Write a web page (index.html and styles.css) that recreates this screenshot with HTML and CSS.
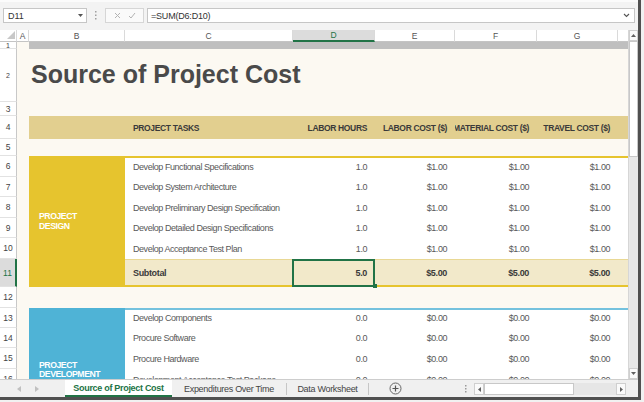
FILE: index.html
```html
<!DOCTYPE html>
<html>
<head>
<meta charset="utf-8">
<title>Source of Project Cost</title>
<link rel="stylesheet" href="styles.css">
</head>
<body>
<div class="window">
  <div class="fbar">
    <div class="namebox"><span>D11</span><svg class="nb-arrow" width="5" height="3" viewBox="0 0 5 3"><path d="M0 0h5L2.5 3z" fill="#555"/></svg></div>
    <div class="vdots"><svg width="2" height="9" viewBox="0 0 2 9"><rect x="0" y="0" width="1.5" height="1.5" fill="#a0a0a0"/><rect x="0" y="3.5" width="1.5" height="1.5" fill="#a0a0a0"/><rect x="0" y="7" width="1.5" height="1.5" fill="#a0a0a0"/></svg></div>
    <div class="fbtns">
      <svg width="7" height="7" viewBox="0 0 7 7"><path d="M1 1l5 5M6 1l-5 5" stroke="#b3b3b3" stroke-width="1"/></svg>
      <svg width="8" height="7" viewBox="0 0 8 7"><path d="M1 4l2 2 4-5" stroke="#b3b3b3" stroke-width="1" fill="none"/></svg>
    </div>
    <div class="finput"><span>=SUM(D6:D10)</span><svg width="7" height="5" viewBox="0 0 7 5"><path d="M1 1l2.5 2.5L6 1" stroke="#555" stroke-width="1.1" fill="none"/></svg></div>
  </div>

  <div class="main">
    <div class="sheet">
      <!-- column headers -->
      <div class="ch corner"><svg width="8" height="8" viewBox="0 0 8 8"><path d="M8 0v8H0z" fill="#c8c8c8"/></svg></div>
      <div class="ch">A</div>
      <div class="ch">B</div>
      <div class="ch">C</div>
      <div class="ch sel">D</div>
      <div class="ch">E</div>
      <div class="ch">F</div>
      <div class="ch">G</div>
      <div class="ch last"></div>

      <!-- row 1 -->
      <div class="rh tiny">1</div>
      <div class="c"></div>
      <div class="c band span7"></div>

      <!-- row 2 -->
      <div class="rh tiny">2</div>
      <div class="c"></div>
      <div class="c title span7">Source of Project Cost</div>

      <!-- row 3 -->
      <div class="rh">3</div>
      <div class="c"></div>
      <div class="c span7"></div>

      <!-- row 4 -->
      <div class="rh">4</div>
      <div class="c"></div>
      <div class="c hb"></div>
      <div class="c hb l">PROJECT TASKS</div>
      <div class="c hb r">LABOR HOURS</div>
      <div class="c hb r">LABOR COST ($)</div>
      <div class="c hb r">MATERIAL COST ($)</div>
      <div class="c hb r">TRAVEL COST ($)</div>
      <div class="c hb"></div>

      <!-- row 5 -->
      <div class="rh">5</div>
      <div class="c"></div>
      <div class="c span7"></div>

      <!-- row 6 -->
      <div class="rh">6</div>
      <div class="c"></div>
      <div class="c block yb">PROJECT<br>DESIGN</div>
      <div class="c w gtop l">Develop Functional Specifications</div>
      <div class="c w gtop r">1.0</div>
      <div class="c w gtop r">$1.00</div>
      <div class="c w gtop r">$1.00</div>
      <div class="c w gtop r">$1.00</div>
      <div class="c w gtop"></div>

      <!-- row 7 -->
      <div class="rh">7</div>
      <div class="c"></div>
      <div class="c w l">Develop System Architecture</div>
      <div class="c w r">1.0</div>
      <div class="c w r">$1.00</div>
      <div class="c w r">$1.00</div>
      <div class="c w r">$1.00</div>
      <div class="c w"></div>

      <!-- row 8 -->
      <div class="rh">8</div>
      <div class="c"></div>
      <div class="c w l">Develop Preliminary Design Specification</div>
      <div class="c w r">1.0</div>
      <div class="c w r">$1.00</div>
      <div class="c w r">$1.00</div>
      <div class="c w r">$1.00</div>
      <div class="c w"></div>

      <!-- row 9 -->
      <div class="rh">9</div>
      <div class="c"></div>
      <div class="c w l">Develop Detailed Design Specifications</div>
      <div class="c w r">1.0</div>
      <div class="c w r">$1.00</div>
      <div class="c w r">$1.00</div>
      <div class="c w r">$1.00</div>
      <div class="c w"></div>

      <!-- row 10 -->
      <div class="rh">10</div>
      <div class="c"></div>
      <div class="c w l">Develop Acceptance Test Plan</div>
      <div class="c w r">1.0</div>
      <div class="c w r">$1.00</div>
      <div class="c w r">$1.00</div>
      <div class="c w r">$1.00</div>
      <div class="c w"></div>

      <!-- row 11 -->
      <div class="rh sel">11</div>
      <div class="c"></div>
      <div class="c st l">Subtotal</div>
      <div class="c st r selcell">5.0</div>
      <div class="c st r">$5.00</div>
      <div class="c st r">$5.00</div>
      <div class="c st r">$5.00</div>
      <div class="c st"></div>

      <!-- row 12 -->
      <div class="rh">12</div>
      <div class="c"></div>
      <div class="c span7"></div>

      <!-- row 13 -->
      <div class="rh">13</div>
      <div class="c"></div>
      <div class="c block bb">PROJECT<br>DEVELOPMENT</div>
      <div class="c w btop l">Develop Components</div>
      <div class="c w btop r">0.0</div>
      <div class="c w btop r">$0.00</div>
      <div class="c w btop r">$0.00</div>
      <div class="c w btop r">$0.00</div>
      <div class="c w btop"></div>

      <!-- row 14 -->
      <div class="rh">14</div>
      <div class="c"></div>
      <div class="c w l">Procure Software</div>
      <div class="c w r">0.0</div>
      <div class="c w r">$0.00</div>
      <div class="c w r">$0.00</div>
      <div class="c w r">$0.00</div>
      <div class="c w"></div>

      <!-- row 15 -->
      <div class="rh">15</div>
      <div class="c"></div>
      <div class="c w l">Procure Hardware</div>
      <div class="c w r">0.0</div>
      <div class="c w r">$0.00</div>
      <div class="c w r">$0.00</div>
      <div class="c w r">$0.00</div>
      <div class="c w"></div>

      <!-- row 16 -->
      <div class="rh">16</div>
      <div class="c"></div>
      <div class="c w l">Development Acceptance Test Package</div>
      <div class="c w r">0.0</div>
      <div class="c w r">$0.00</div>
      <div class="c w r">$0.00</div>
      <div class="c w r">$0.00</div>
      <div class="c w"></div>

      <!-- row 17 -->
      <div class="rh">17</div>
      <div class="c"></div>
      <div class="c w l"></div>
      <div class="c w"></div>
      <div class="c w"></div>
      <div class="c w"></div>
      <div class="c w"></div>
      <div class="c w"></div>

      <!-- row 18 -->
      <div class="rh">18</div>
      <div class="c"></div>
      <div class="c w l"></div>
      <div class="c w"></div>
      <div class="c w"></div>
      <div class="c w"></div>
      <div class="c w"></div>
      <div class="c w"></div>
    </div>

    <div class="vscroll">
      <div class="vbtn"><svg width="5" height="3" viewBox="0 0 5 3"><path d="M0 3h5L2.5 0z" fill="#606060"/></svg></div>
      <div class="vthumb"></div>
      <div class="vtrack"></div>
      <div class="vbtn"><svg width="5" height="3" viewBox="0 0 5 3"><path d="M0 0h5L2.5 3z" fill="#606060"/></svg></div>
    </div>
  </div>

  <div class="tabbar">
    <div class="nav">
      <svg width="4" height="6" viewBox="0 0 4 6"><path d="M4 0v6L0 3z" fill="#c0c0c0"/></svg>
      <svg width="4" height="6" viewBox="0 0 4 6"><path d="M0 0v6l4-3z" fill="#c0c0c0"/></svg>
    </div>
    <div class="tab active">Source of Project Cost</div>
    <div class="tab t2">Expenditures Over Time</div>
    <div class="sep"></div>
    <div class="tab t3">Data Worksheet</div>
    <div class="sep"></div>
    <div class="plus"><svg width="13" height="13" viewBox="0 0 13 13"><circle cx="6.5" cy="6.5" r="5.5" fill="none" stroke="#666" stroke-width="1"/><path d="M6.5 3.5v6M3.5 6.5h6" stroke="#555" stroke-width="1.2"/></svg></div>
    <div class="hdots"><svg width="2" height="8" viewBox="0 0 2 8"><rect x="0" y="0" width="1.5" height="1.5" fill="#9a9a9a"/><rect x="0" y="3" width="1.5" height="1.5" fill="#9a9a9a"/><rect x="0" y="6" width="1.5" height="1.5" fill="#9a9a9a"/></svg></div>
    <div class="hscroll">
      <div class="hbtn"><svg width="3" height="5" viewBox="0 0 3 5"><path d="M3 0v5L0 2.5z" fill="#606060"/></svg></div>
      <div class="hthumb"></div>
      <div class="htrack"></div>
      <div class="hbtn"><svg width="3" height="5" viewBox="0 0 3 5"><path d="M0 0v5l3-2.5z" fill="#606060"/></svg></div>
    </div>
  </div>
</div>
</body>
</html>
```

FILE: styles.css
```css
* { box-sizing: border-box; }
html, body { margin: 0; padding: 0; }
body {
  width: 644px;
  height: 402px;
  overflow: hidden;
  background: #f1f1f1;
  font-family: "Liberation Sans", Arial, sans-serif;
}
.window {
  width: 641px;
  height: 400px;
  border-right: 3px solid #505050;
  border-bottom: 3px solid #505050;
  display: flex;
  flex-direction: column;
  background: #f3f3f3;
}

/* formula bar */
.fbar {
  flex: none;
  height: 30px;
  display: flex;
  align-items: flex-start;
  padding: 6px 0 0 3px;
  border-top: 2px solid #fbfbfb;
  background: #f3f3f3;
  font-size: 9px;
  color: #333;
}
.namebox {
  width: 84px;
  height: 15px;
  background: #fff;
  border: 1px solid #c6c6c6;
  display: flex;
  align-items: center;
  justify-content: space-between;
  padding: 0 3px 0 4px;
}
.vdots {
  width: 18px;
  height: 15px;
  display: flex;
  align-items: center;
  justify-content: center;
}
.fbtns {
  width: 39px;
  height: 15px;
  border: 1px solid #d6d6d6;
  background: #fafafa;
  display: flex;
  align-items: center;
  justify-content: space-around;
  padding: 0 4px;
}
.finput {
  margin-left: 3px;
  width: 488px;
  height: 15px;
  background: #fff;
  border: 1px solid #c6c6c6;
  display: flex;
  align-items: center;
  justify-content: space-between;
  padding: 0 4px 0 3px;
  letter-spacing: -0.2px;
}

/* main area */
.main {
  flex: none;
  height: 349px;
  display: flex;
}
.sheet {
  width: 628px;
  height: 349px;
  overflow: hidden;
  display: grid;
  grid-template-columns: 17px 12px 96px 168px 82px 80px 82px 81px 10px;
  grid-template-rows: 12px 7px 53px 14px 23px 17px 21px 20px 21px 20px 21px 28px 21px 20px 20px 21px 21px 21px 21px;
  background: #fcf9f2;
  font-size: 9px;
  letter-spacing: -0.45px;
  color: #595959;
}
.c {
  display: flex;
  align-items: center;
  white-space: nowrap;
  overflow: hidden;
  min-width: 0;
}
.l { padding-left: 8px; }
.r { justify-content: flex-end; padding-right: 8px; }
.span7 { grid-column: span 7; }

.ch {
  background: #fff;
  border-right: 1px solid #dadada;
  border-bottom: 1px solid #c4c4c4;
  display: flex;
  align-items: center;
  justify-content: center;
  color: #555;
  font-size: 8.5px;
  letter-spacing: 0;
}
.ch.corner {
  align-items: flex-end;
  justify-content: flex-end;
  padding: 0 1px 2px 0;
}
.ch.sel {
  background: #dcdcdc;
  color: #217346;
  border-bottom: 2px solid #217346;
}
.ch.last { border-right: none; }

.rh {
  background: #fff;
  border-right: 1px solid #c8c8c8;
  border-bottom: 1px solid #e2e2e2;
  display: flex;
  align-items: center;
  justify-content: center;
  color: #444;
  font-size: 8.5px;
  letter-spacing: 0;
}
.rh.tiny { font-size: 7px; line-height: 7px; }
.rh.sel {
  background: #dcdcdc;
  color: #217346;
  border-right: 2px solid #217346;
}

.band { background: #bfbfbf; }
.title {
  font-size: 25px;
  font-weight: bold;
  color: #4a4a4a;
  letter-spacing: 0;
  padding-left: 2px;
  padding-bottom: 2px;
}
.hb {
  background: #e2cf8f;
  font-weight: bold;
  color: #3a3a3a;
  font-size: 8.5px;
  letter-spacing: -0.35px;
}
.w { background: #fff; }
.gtop { box-shadow: inset 0 2px 0 #e6c42e; }
.btop { box-shadow: inset 0 2px 0 #74c2de; }

.block {
  grid-row: span 6;
  white-space: normal;
  align-items: center;
  padding-left: 10px;
  color: #fff;
  font-weight: bold;
  font-size: 8.7px;
  line-height: 9.5px;
  letter-spacing: -0.45px;
}
.yb { background: #e6c42e; }
.bb { background: #4fb3d6; }

.st {
  background: #f2e9ca;
  border-top: 1px solid #e9d894;
  border-bottom: 2px solid #e6c42e;
  font-weight: bold;
  color: #3a3a3a;
  letter-spacing: -0.35px;
}
.selcell {
  position: relative;
  overflow: visible;
}
.selcell::after {
  content: "";
  position: absolute;
  left: -1px;
  top: -1px;
  right: 0;
  bottom: -2px;
  border: 2px solid #217346;
}
.selcell::before {
  content: "";
  position: absolute;
  right: -2px;
  bottom: -3px;
  width: 4px;
  height: 4px;
  background: #217346;
  z-index: 2;
}

/* vertical scrollbar */
.vscroll {
  width: 10px;
  height: 349px;
  background: #e8e8e8;
  display: flex;
  flex-direction: column;
  border-left: 1px solid #d6d6d6;
}
.vbtn {
  flex: none;
  height: 11px;
  background: #fafafa;
  border: 1px solid #cfcfcf;
  display: flex;
  align-items: center;
  justify-content: center;
}
.vthumb {
  flex: none;
  height: 116px;
  background: #fff;
  border: 1px solid #c8c8c8;
}
.vtrack { flex: 1; }

/* tab bar */
.tabbar {
  flex: none;
  height: 18px;
  display: flex;
  align-items: stretch;
  background: #f0f0f0;
  border-top: 1px solid #cdcdcd;
  font-size: 9px;
  letter-spacing: -0.3px;
  color: #444;
}
.nav {
  width: 65px;
  display: flex;
  align-items: center;
  gap: 14px;
  padding-left: 17px;
}
.tab {
  display: flex;
  align-items: center;
  justify-content: center;
  white-space: nowrap;
}
.tab.active {
  width: 107px;
  background: #fff;
  color: #217346;
  font-weight: bold;
  border-bottom: 2px solid #217346;
  padding-top: 1px;
}
.t2 { width: 114px; }
.t3 { width: 81px; }
.sep {
  width: 1px;
  margin: 3px 0 2px;
  background: #c6c6c6;
}
.plus {
  width: 56px;
  display: flex;
  align-items: center;
  padding-left: 20px;
}
.hdots {
  width: 49px;
  display: flex;
  align-items: center;
  padding-left: 40px;
}
.hscroll {
  width: 152px;
  margin: 3px 0 2px 0;
  display: flex;
  background: #e6e6e6;
}
.hbtn {
  flex: none;
  width: 10px;
  background: #fafafa;
  border: 1px solid #cfcfcf;
  display: flex;
  align-items: center;
  justify-content: center;
}
.hthumb {
  flex: none;
  width: 90px;
  background: #fff;
  border: 1px solid #c8c8c8;
}
.htrack { flex: 1; }
```
